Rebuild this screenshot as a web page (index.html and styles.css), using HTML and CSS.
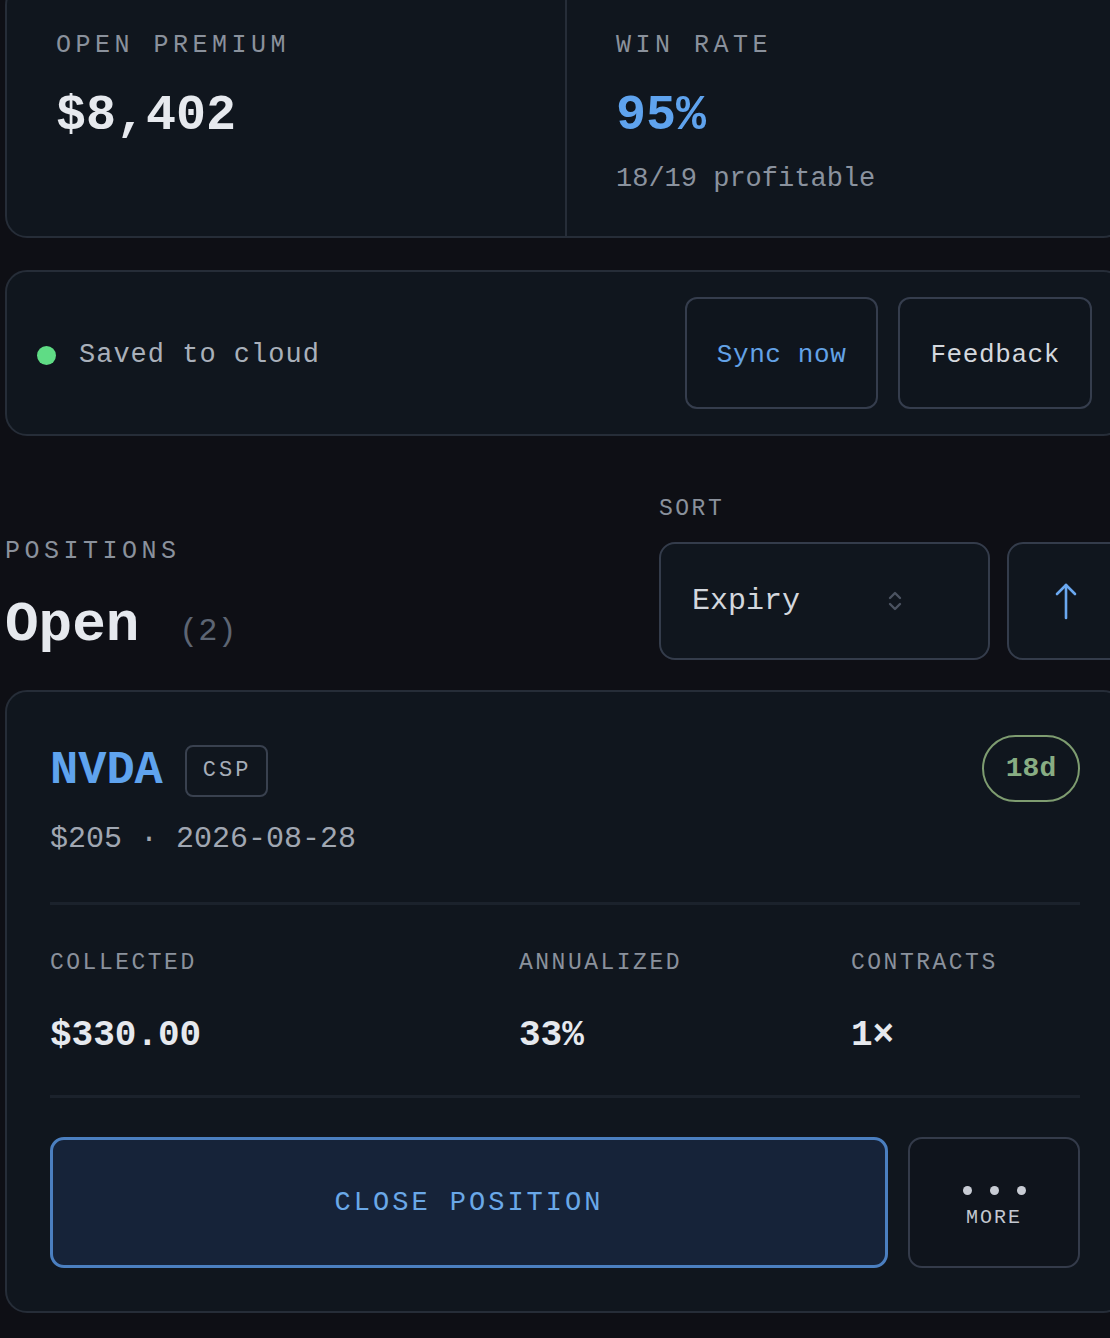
FILE: index.html
```html
<!DOCTYPE html>
<html>
<head>
<meta charset="utf-8">
<title>Positions</title>
<link rel="stylesheet" href="styles.css">
</head>
<body>
<div class="page">

  <section class="card stats">
    <div class="stat">
      <div class="label">OPEN PREMIUM</div>
      <div class="stat-value">$8,402</div>
    </div>
    <div class="stat stat-right">
      <div class="label">WIN RATE</div>
      <div class="stat-value blue">95%</div>
      <div class="stat-sub">18/19 profitable</div>
    </div>
  </section>

  <section class="card sync">
    <div class="sync-status"><span class="dot"></span>Saved to cloud</div>
    <div class="sync-actions">
      <button class="btn btn-blue">Sync now</button>
      <button class="btn">Feedback</button>
    </div>
  </section>

  <header class="positions-head">
    <div class="head-left">
      <div class="label">POSITIONS</div>
      <h2 class="title">Open <span class="count">(2)</span></h2>
    </div>
    <div class="head-right">
      <div class="label label-sm">SORT</div>
      <div class="sort-row">
        <div class="select">
          <span>Expiry</span>
          <svg class="chev" width="16" height="24" viewBox="0 0 16 24" fill="none" stroke="#4b5361" stroke-width="2.4" stroke-linecap="round" stroke-linejoin="round">
            <path d="M3 9 L8 4 L13 9"/>
            <path d="M3 15 L8 20 L13 15"/>
          </svg>
        </div>
        <button class="sort-dir">
          <svg width="24" height="40" viewBox="0 0 24 40" fill="none" stroke="#6aa8f0" stroke-width="2.6" stroke-linecap="round" stroke-linejoin="round">
            <path d="M12 37 L12 4"/>
            <path d="M3 13 L12 4 L21 13"/>
          </svg>
        </button>
      </div>
    </div>
  </header>

  <article class="card position">
    <div class="pos-top">
      <div class="pos-name">
        <span class="ticker">NVDA</span>
        <span class="tag">CSP</span>
      </div>
      <span class="days">18d</span>
    </div>
    <div class="pos-sub">$205<span class="sep">·</span>2026-08-28</div>

    <div class="rule"></div>

    <div class="metrics">
      <div>
        <div class="label label-sm">COLLECTED</div>
        <div class="metric-value">$330.00</div>
      </div>
      <div>
        <div class="label label-sm">ANNUALIZED</div>
        <div class="metric-value">33%</div>
      </div>
      <div>
        <div class="label label-sm">CONTRACTS</div>
        <div class="metric-value">1×</div>
      </div>
    </div>

    <div class="rule rule-low"></div>

    <div class="pos-actions">
      <button class="close-btn">CLOSE POSITION</button>
      <button class="more-btn">
        <span class="dots"><i></i><i></i><i></i></span>
        <span>MORE</span>
      </button>
    </div>
  </article>

</div>
</body>
</html>
```

FILE: styles.css
```css
html, body {
  margin: 0;
  padding: 0;
  overflow: hidden;
  background-color: #0e0f15;
}

body {
  font-family: "Liberation Mono", "DejaVu Sans Mono", monospace;
  color: #e6e9ee;
}

button {
  font-family: inherit;
  cursor: pointer;
}

.page {
  width: 1120px;
  margin: -17px 0 0 5px;
  display: flex;
  flex-direction: column;
  gap: 32px;
}

.card {
  background-color: #10161e;
  border: 2px solid #262d38;
  border-radius: 22px;
}

.label {
  font-size: 25px;
  line-height: 30px;
  letter-spacing: 4.5px;
  color: #8a919c;
}

.label-sm {
  font-size: 23px;
  line-height: 28px;
  letter-spacing: 2.5px;
}

/* stats */

.stats {
  display: grid;
  grid-template-columns: 1fr 1fr;
}

.stat {
  padding: 46px 50px 41px 49px;
}

.stat-right {
  border-left: 2px solid #262d38;
}

.stat-value {
  margin-top: 25px;
  font-size: 50px;
  line-height: 60px;
  font-weight: bold;
}

.blue {
  color: #5fa3ee;
}

.stat-sub {
  margin-top: 17px;
  font-size: 27px;
  line-height: 32px;
  color: #8a929e;
}

/* sync */

.sync {
  display: flex;
  align-items: center;
  justify-content: space-between;
  padding: 25px 31px 25px 30px;
}

.sync-status {
  display: flex;
  align-items: center;
  padding-top: 4px;
  font-size: 27px;
  letter-spacing: 1px;
  color: #a9b0ba;
}

.dot {
  width: 19px;
  height: 19px;
  border-radius: 50%;
  background-color: #5fdc85;
  margin-right: 23px;
}

.sync-actions {
  display: flex;
  gap: 20px;
}

.btn {
  height: 112px;
  padding: 4px 30px 0;
  background-color: #0f151d;
  border: 2px solid #353d4d;
  border-radius: 12px;
  font-size: 26px;
  letter-spacing: 0.6px;
  color: #d4d8de;
}

.btn-blue {
  color: #63a2e6;
}

/* positions header */

.positions-head {
  margin-top: 27px;
  display: flex;
  justify-content: space-between;
  align-items: flex-end;
}

.title {
  margin: 30px 0 0;
  font-size: 56px;
  line-height: 56px;
  font-weight: bold;
  color: #e6e9ee;
}

.count {
  margin-left: 6px;
  font-size: 32px;
  font-weight: normal;
  color: #5d6573;
}

.head-right {
  width: 466px;
}

.sort-row {
  margin-top: 19px;
  display: flex;
  gap: 17px;
}

.select {
  flex: 1;
  height: 118px;
  box-sizing: border-box;
  display: flex;
  align-items: center;
  padding: 0 85px 0 31px;
  background-color: #10161e;
  border: 2px solid #343c4b;
  border-radius: 16px;
  font-size: 30px;
  color: #d3d7dd;
}

.chev {
  margin-left: auto;
}

.sort-dir {
  width: 118px;
  height: 118px;
  padding: 0;
  display: flex;
  align-items: center;
  justify-content: center;
  background-color: #10161e;
  border: 2px solid #343c4b;
  border-radius: 16px;
}

/* position card */

.position {
  margin-top: -2px;
  padding: 43px 43px 43px;
}

.pos-top {
  display: flex;
  align-items: center;
  justify-content: space-between;
}

.pos-name {
  display: flex;
  align-items: center;
  padding-top: 4px;
}

.ticker {
  font-size: 47px;
  line-height: 56px;
  font-weight: bold;
  color: #5fa3ee;
}

.tag {
  margin-left: 22px;
  height: 52px;
  box-sizing: border-box;
  padding: 0 15px 0 16px;
  display: flex;
  align-items: center;
  border: 2px solid #39414f;
  border-radius: 8px;
  font-size: 22px;
  letter-spacing: 3px;
  color: #a6adb8;
}

.days {
  width: 98px;
  height: 67px;
  box-sizing: border-box;
  display: flex;
  align-items: center;
  justify-content: center;
  border: 2.5px solid #7e9c70;
  border-radius: 34px;
  font-size: 28px;
  font-weight: bold;
  color: #88ad83;
}

.pos-sub {
  margin-top: 19px;
  font-size: 30px;
  line-height: 36px;
  color: #a0a7b2;
}

.sep {
  margin: 0 18px;
}

.rule {
  margin-top: 45px;
  height: 3px;
  background-color: #1b222c;
}

.rule-low {
  margin-top: 38px;
}

.metrics {
  margin-top: 44px;
  display: grid;
  grid-template-columns: 469px 332px 1fr;
}

.metric-value {
  margin-top: 37px;
  font-size: 36px;
  line-height: 43px;
  font-weight: bold;
  color: #e6e9ee;
}

.pos-actions {
  margin-top: 39px;
  display: flex;
  gap: 20px;
}

.close-btn {
  flex: 1;
  height: 131px;
  background-color: #162339;
  border: 3px solid #4b7fc0;
  border-radius: 14px;
  font-size: 27px;
  letter-spacing: 3px;
  color: #6aa8e8;
}

.more-btn {
  width: 172px;
  height: 131px;
  display: flex;
  flex-direction: column;
  align-items: center;
  justify-content: center;
  gap: 11px;
  padding-top: 6px;
  background-color: #0f141c;
  border: 2px solid #343b4a;
  border-radius: 14px;
  font-size: 20px;
  letter-spacing: 2px;
  color: #c3c8d0;
}

.dots {
  display: flex;
  gap: 18px;
  margin-top: 4px;
}

.dots i {
  width: 9px;
  height: 9px;
  border-radius: 50%;
  background-color: #c8ccd4;
}
```
